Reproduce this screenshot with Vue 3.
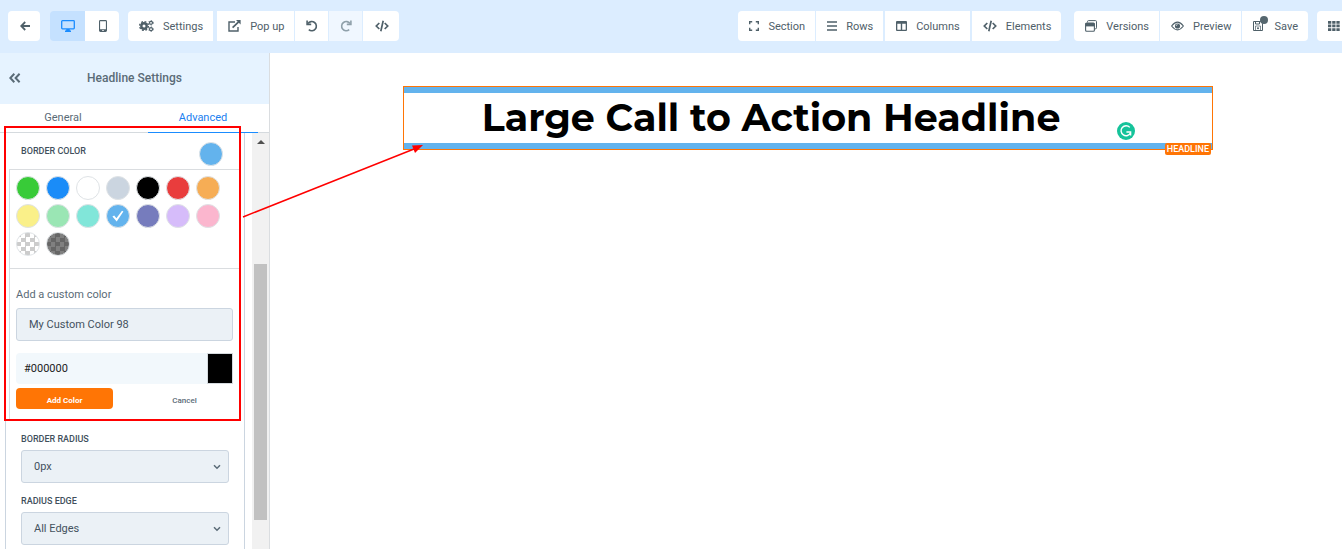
<script setup>
import { ref } from 'vue'

const device = ref('desktop')
const tab = ref('Advanced')
const tabs = ['General', 'Advanced']
const selected = ref('#63b3ed')
const colorName = ref('My Custom Color 98')
const hex = ref('#000000')
const radius = ref('0px')
const edge = ref('All Edges')

const colors = [
  '#38cb38', '#1a8cf8', '#ffffff', '#cbd5e0', '#000000', '#e93d3d', '#f6ad55',
  '#faf089', '#9ae6b4', '#81e6d9', '#63b3ed', '#767cbd', '#d6bcfa', '#fbb6ce',
]
</script>

<template>
  <div class="app">
    <header class="toolbar">
      <div class="group">
        <button class="btn back" aria-label="Back">
          <svg width="10" height="10" viewBox="0 0 10 10"><path d="M10 5H1.4M5.200 1 1.200 5l4 4" fill="none" stroke="currentColor" stroke-width="1.800" /></svg>
        </button>
        <div class="set devices">
          <button class="btn device" :class="{ on: device === 'desktop' }" aria-label="Desktop" @click="device = 'desktop'">
            <svg width="14" height="12" viewBox="0 0 14 12"><rect x=".7" y=".7" width="12.6" height="8.1" rx=".8" fill="none" stroke="currentColor" stroke-width="1.3" /><path d="M5.4 9h3.2l.3 1.6H10V12H4v-1.4h1.1z" fill="currentColor" /></svg>
          </button>
          <button class="btn device" :class="{ on: device === 'phone' }" aria-label="Phone" @click="device = 'phone'">
            <svg width="8" height="12" viewBox="0 0 8 12"><path fill-rule="evenodd" d="M1.4 0h5.2Q8 0 8 1.4v9.2Q8 12 6.6 12H1.4Q0 12 0 10.6V1.4Q0 0 1.4 0zM1.1 1.3v7.9h5.8V1.3zM3.3 10v1h1.4v-1z" fill="currentColor" /></svg>
          </button>
        </div>
        <button class="btn settings">
          <svg width="15" height="12" viewBox="0 0 15 12">
            <circle cx="5" cy="6" r="2.700" fill="none" stroke="currentColor" stroke-width="2.400" />
            <circle cx="5" cy="6" r="4.400" fill="none" stroke="currentColor" stroke-width="1.400" stroke-dasharray="1.900 1.556" />
            <circle cx="12" cy="2.8" r="1.5" fill="none" stroke="currentColor" stroke-width="1.2" />
            <circle cx="12" cy="2.8" r="2.3" fill="none" stroke="currentColor" stroke-width=".8" stroke-dasharray="1.2 1.2" />
            <circle cx="12" cy="9.2" r="1.5" fill="none" stroke="currentColor" stroke-width="1.2" />
            <circle cx="12" cy="9.2" r="2.3" fill="none" stroke="currentColor" stroke-width=".8" stroke-dasharray="1.2 1.2" />
          </svg>
          Settings
        </button>
        <div class="set">
          <button class="btn">
            <svg width="13" height="12" viewBox="0 0 13 12"><path d="M7 2H1v9h9V7" fill="none" stroke="currentColor" stroke-width="1.4" /><path d="M4.6 7.6 10.6 1.8" stroke="currentColor" stroke-width="1.7" /><path d="M8 0h4.6v4.6z" fill="currentColor" /></svg>
            Pop up
          </button>
          <button class="btn history" aria-label="Undo">
            <svg width="12" height="12" viewBox="0 0 12 12"><path d="M2 3.5A4.6 4.6 0 1 1 2.8 9.7" fill="none" stroke="currentColor" stroke-width="1.600" /><path d="M1.1.4V4.4H5.2" fill="none" stroke="currentColor" stroke-width="1.600" /></svg>
          </button>
          <button class="btn history" aria-label="Redo" disabled>
            <svg width="12" height="12" viewBox="0 0 12 12"><path d="M10 3.5A4.6 4.6 0 1 0 9.2 9.7" fill="none" stroke="currentColor" stroke-width="1.600" /><path d="M10.9.4V4.4H6.8" fill="none" stroke="currentColor" stroke-width="1.600" /></svg>
          </button>
          <button class="btn code" aria-label="Code">
            <svg width="14" height="12" viewBox="0 0 14 12"><path d="M4.3 3 1.3 6l3 3M9.7 3l3 3-3 3M8.2.8 5.8 11.2" fill="none" stroke="currentColor" stroke-width="1.700" /></svg>
          </button>
        </div>
      </div>

      <div class="group end">
        <div class="set loose">
          <div class="set">
            <button class="btn">
              <svg width="10" height="10" viewBox="0 0 10 10"><path d="M.7 3.2V.7h2.5M6.8.7h2.5v2.5M9.3 6.8v2.5H6.8M3.2 9.3H.7V6.8" fill="none" stroke="currentColor" stroke-width="1.4" /></svg>
              Section
            </button>
            <button class="btn">
              <svg width="10" height="10" viewBox="0 0 10 10"><path d="M0 1h10M0 5h10M0 9h10" stroke="currentColor" stroke-width="1.3" /></svg>
              Rows
            </button>
          </div>
          <button class="btn">
            <svg width="11" height="10" viewBox="0 0 11 10"><path fill-rule="evenodd" d="M1 0h9q1 0 1 1v8q0 1-1 1H1q-1 0-1-1V1q0-1 1-1zM1.3 2.7v6h3.5v-6zM6.2 2.7v6h3.5v-6z" fill="currentColor" /></svg>
            Columns
          </button>
          <button class="btn">
            <svg width="14" height="12" viewBox="0 0 14 12"><path d="M4.3 3 1.3 6l3 3M9.7 3l3 3-3 3M8.2.8 5.8 11.2" fill="none" stroke="currentColor" stroke-width="1.700" /></svg>
            Elements
          </button>
        </div>
        <div class="set files">
          <button class="btn">
            <svg width="12" height="12" viewBox="0 0 12 12"><path d="M2.5 2.4V1.6Q2.5.6 3.5.6h7q1 0 1 1v6.2q0 1-1 1h-.6" fill="none" stroke="currentColor" /><rect x=".6" y="3" width="8.8" height="8.2" rx="1" fill="none" stroke="currentColor" stroke-width="1.1" /><path d="M.6 3h8.8v3.4H.6z" fill="currentColor" /></svg>
            Versions
          </button>
          <button class="btn">
            <svg width="13" height="10" viewBox="0 0 13 10"><path d="M.6 5Q6.5-2.8 12.4 5 6.5 12.800.6 5z" fill="none" stroke="currentColor" stroke-width="1.1" /><circle cx="6.5" cy="5" r="2.6" fill="currentColor" /><path d="M5.2 4.900Q5.200 3.600 6.500 3.600" fill="none" stroke="#fff" stroke-width=".7" /></svg>
            Preview
          </button>
          <button class="btn save">
            <span class="save-icon">
              <svg width="10" height="10" viewBox="0 0 10 10"><path d="M.5.5h7l2 2v7h-9z" fill="none" stroke="currentColor" /><path d="M2.500.5v2.500h4V.5" fill="none" stroke="currentColor" /><path d="M2.500 9.500V5h5v4.500" fill="none" stroke="currentColor" stroke-width=".7" /><circle cx="5" cy="7.200" r="1" fill="currentColor" /></svg>
              <i class="dot"></i>
            </span>
            Save
          </button>
        </div>
        <button class="btn grid" aria-label="Apps">
          <svg width="14" height="10" viewBox="0 0 14 10"><path d="M0 0h3.300v2.700H0zM4.200 0h3.300v2.700H4.200zM8.400 0h3.300v2.700H8.400zM0 3.600h3.300v2.700H0zM4.200 3.600h3.300v2.700H4.200zM8.400 3.600h3.300v2.700H8.400zM0 7.200h3.300v2.700H0zM4.200 7.200h3.300v2.700H4.200zM8.400 7.200h3.300v2.700H8.400z" fill="currentColor" /></svg>
        </button>
      </div>
    </header>

    <div class="workspace">
      <aside class="sidebar">
        <div class="side-head">
          <button class="collapse" aria-label="Collapse panel">
            <svg width="12" height="10" viewBox="0 0 12 10"><path d="M5.300.8 1.300 5l4 4.200M10.600.8 6.600 5l4 4.200" fill="none" stroke="currentColor" stroke-width="2" /></svg>
          </button>
          <h2>Headline Settings</h2>
        </div>
        <nav class="tabs">
          <button v-for="t in tabs" :key="t" :class="{ active: tab === t }" @click="tab = t">{{ t }}</button>
        </nav>
        <div class="scroll">
          <div class="panel">
            <div class="color-head">
              <span class="caption">Border Color</span>
              <button class="swatch current" aria-label="Current color" :style="{ background: selected }"></button>
            </div>
            <div class="picker">
              <div class="palette">
                <button
                  v-for="c in colors"
                  :key="c"
                  class="swatch"
                  :aria-label="c"
                  :style="{ background: c }"
                  @click="selected = c"
                >
                  <svg v-if="selected === c" width="12" height="12" viewBox="0 0 12 12"><path d="M.4 6.600 2.200 5.400 4.400 8.200 10 .8l1.400.8L4.700 11.400z" fill="#fff" /></svg>
                </button>
                <button class="swatch checker" aria-label="Transparent"></button>
                <button class="swatch checker dark" aria-label="Translucent black"></button>
              </div>
              <form class="custom" @submit.prevent>
                <label class="hint" for="color-name">Add a custom color</label>
                <input id="color-name" v-model="colorName" class="field" type="text" />
                <div class="hex">
                  <input v-model="hex" type="text" aria-label="Hex value" />
                  <input v-model="hex" type="color" aria-label="Pick a color" />
                </div>
                <div class="actions">
                  <button class="add" type="submit">Add Color</button>
                  <button class="cancel" type="button">Cancel</button>
                </div>
              </form>
            </div>
            <div class="option">
              <label class="caption" for="radius">Border Radius</label>
              <div class="select">
                <select id="radius" v-model="radius" class="field"><option>0px</option><option>5px</option><option>10px</option></select>
                <svg width="8" height="6" viewBox="0 0 8 6"><path d="m1 1.200 3 3 3-3" fill="none" stroke="currentColor" stroke-width="1.500" /></svg>
              </div>
            </div>
            <div class="option">
              <label class="caption" for="edge">Radius Edge</label>
              <div class="select">
                <select id="edge" v-model="edge" class="field"><option>All Edges</option><option>Top Only</option><option>Bottom Only</option></select>
                <svg width="8" height="6" viewBox="0 0 8 6"><path d="m1 1.200 3 3 3-3" fill="none" stroke="currentColor" stroke-width="1.500" /></svg>
              </div>
            </div>
          </div>
          <div class="scrollbar">
            <svg width="8" height="4" viewBox="0 0 8 4"><path d="M0 4 4 0l4 4z" fill="#505050" /></svg>
            <div class="thumb"></div>
          </div>
        </div>
      </aside>

      <main class="canvas">
        <section class="headline">
          <h1>Large Call to Action Headline</h1>
          <svg class="checker-badge" width="18" height="18" viewBox="0 0 18 18"><circle cx="9" cy="9" r="9" fill="#15c39a" /><path d="M12.800 5.400A5 5 0 1 0 13.600 10.800" fill="none" stroke="#fff" stroke-width="1.400" /><path d="M9.400 10h4.200v3.400" fill="none" stroke="#fff" stroke-width="1.400" /></svg>
          <span class="tag">HEADLINE</span>
        </section>
      </main>
    </div>

    <div class="callout"></div>
    <svg class="arrow" width="184" height="80" viewBox="0 0 184 80"><path d="M1 76 172 8" stroke="#f00" stroke-width="1.400" /><path d="M181 4 170 4.600 173 12z" fill="#f00" /></svg>
  </div>
</template>

<style>
body {
  background: #fff;
}
</style>

<style scoped>
.app {
  position: relative;
  display: flex;
  flex-direction: column;
  height: 100vh;
  overflow: hidden;
  font-family: Roboto, "Liberation Sans", sans-serif;
  font-size: 12px;
  color: #5a6b77;
}
* {
  box-sizing: border-box;
}
button,
input,
select {
  font: inherit;
  color: inherit;
  border: 0;
  padding: 0;
  margin: 0;
  background: none;
}
svg {
  display: block;
  flex: none;
}

.toolbar {
  display: flex;
  justify-content: space-between;
  flex: none;
  height: 53px;
  padding: 11px 0 12px 8px;
  background: #dcedff;
}
.group,
.set {
  display: flex;
}
.set {
  gap: 1px;
}
.loose {
  gap: 2px;
}
.btn {
  display: flex;
  align-items: center;
  justify-content: center;
  gap: 9px;
  height: 30px;
  padding: 0 10px 0 11px;
  background: #fff;
  font-weight: 400;
  font-size: 11px;
  color: #4f6069;
  white-space: nowrap;
}
.back {
  width: 32px;
  border-radius: 4px;
}
.devices {
  gap: 0;
  margin: 0 9px 0 10px;
}
.device {
  width: 35px;
}
.device:first-child {
  border-radius: 4px 0 0 4px;
}
.device:last-child {
  width: 34px;
  border-radius: 0 4px 4px 0;
}
.device.on {
  background: #c5e1ff;
  color: #1a8cff;
}
.settings {
  margin-right: 4px;
  border-radius: 4px 0 0 4px;
}
.history {
  width: 33px;
}
.code {
  width: 36px;
}
.history:disabled {
  background: #f0f7ff;
  color: #8fa0aa;
}
.set > .btn:last-child {
  border-radius: 0 4px 4px 0;
}
.loose .set > .btn:last-child {
  border-radius: 0;
}
.end .set .btn:first-child {
  border-radius: 4px 0 0 4px;
}
.end .loose > .btn {
  border-radius: 0;
}
.end .loose > .btn:last-child {
  border-radius: 0 4px 4px 0;
}
.files {
  margin: 0 9px 0 13px;
}
.save-icon {
  position: relative;
  margin-right: 2px;
}
.dot {
  position: absolute;
  top: -5px;
  left: 7px;
  width: 8px;
  height: 8px;
  border-radius: 50%;
  background: #56676f;
}
.grid {
  width: 25px;
  padding: 0 0 0 11px;
  justify-content: flex-start;
  border-radius: 4px 0 0 4px;
}

.workspace {
  display: flex;
  flex: 1;
  min-height: 0;
}
.sidebar {
  display: flex;
  flex-direction: column;
  width: 270px;
  flex: none;
  border-right: 1px solid #dadde0;
}
.side-head {
  display: grid;
  grid-template-columns: 24px 1fr 24px;
  align-items: center;
  height: 51px;
  flex: none;
  padding-bottom: 2px;
  background: #e6f3ff;
}
.collapse {
  padding-left: 9px;
}
h2 {
  margin: 0;
  text-align: center;
  font-size: 12px;
  font-weight: 500;
}
.tabs {
  display: flex;
  gap: 30px;
  flex: none;
  height: 29px;
  padding-left: 8px;
  border-bottom: 1px solid #d5dade;
}
.tabs button {
  width: 110px;
  height: 29px;
  border-bottom: 1px solid transparent;
  padding-bottom: 2px;
  font-size: 11px;
}
.tabs .active {
  color: #1a80f0;
  border-color: #1a8cff;
}
.scroll {
  display: flex;
  justify-content: space-between;
  flex: 1;
  min-height: 0;
  overflow: hidden;
  padding-left: 5px;
}
.panel {
  width: 240px;
  flex: none;
  border: solid #cbd5e0;
  border-width: 0 1px;
}
.color-head {
  display: flex;
  justify-content: space-between;
  align-items: flex-end;
  height: 36px;
  padding: 0 21px 3px 15px;
}
.color-head .caption {
  padding-bottom: 9px;
}
.caption {
  display: block;
  font-size: 9px;
  line-height: 12px;
  font-weight: 500;
  text-transform: uppercase;
  color: #414f5c;
}
.swatch {
  display: flex;
  align-items: center;
  justify-content: center;
  width: 24px;
  height: 24px;
  border: 1px solid #dfe3e6;
  border-radius: 50%;
}
.picker {
  margin: 0 4px 0 3px;
  border: solid #dadde0;
  border-width: 1px 0 0 1px;
}
.palette {
  display: grid;
  grid-template-columns: repeat(7, 24px);
  gap: 4px 6px;
  padding: 6px 6px 12px;
  border-bottom: 1px solid #dadde0;
}
.checker {
  background: repeating-conic-gradient(#ccc 0 25%, #fff 0 50%) 4px 0 / 9px 9px;
}
.checker.dark {
  background: repeating-conic-gradient(#666 0 25%, #808080 0 50%) 4px 0 / 9px 9px;
}
.custom {
  padding: 18px 7px 12px 6px;
}
.hint {
  display: block;
  margin-bottom: 6px;
  font-size: 11px;
  line-height: 15px;
}
.field {
  display: block;
  width: 100%;
  height: 33px;
  padding: 0 12px;
  border: 1px solid #cbd5e0;
  border-radius: 3px;
  background: #ebf1f6;
  font-size: 11px;
  color: #44525e;
}
.hex {
  display: flex;
  margin-top: 12px;
  height: 31px;
  border-radius: 4px;
  background: #f2f8fc;
}
.hex input[type="text"] {
  flex: 1;
  min-width: 0;
  padding-left: 8px;
  font-size: 11px;
  color: #222;
}
.hex input[type="color"] {
  width: 26px;
  height: 31px;
  border: 1px solid #d5dade;
}
.hex input::-webkit-color-swatch-wrapper {
  padding: 0;
}
.hex input::-webkit-color-swatch {
  border: 0;
}
.actions {
  display: grid;
  grid-template-columns: 97px 97px;
  justify-content: space-between;
  margin-top: 4px;
  height: 21px;
  font-size: 8px;
}
.actions button {
  padding-top: 3px;
}
.actions .add {
  border-radius: 4px;
  background: #ff7505;
  color: #fff;
  font-weight: 700;
}
.actions .cancel {
  font-weight: 500;
}
.option {
  padding: 12px 15px 0;
}
.option .caption {
  margin-bottom: 5px;
}
.select {
  position: relative;
}
.select select {
  appearance: none;
}
.select svg {
  position: absolute;
  top: 14px;
  right: 8px;
  pointer-events: none;
}
.scrollbar {
  display: flex;
  flex-direction: column;
  align-items: center;
  width: 17px;
  padding-top: 7px;
  background: #f1f1f1;
}
.thumb {
  width: 13px;
  height: 256px;
  margin-top: 120px;
  flex: none;
  background: #c1c1c1;
}

.canvas {
  flex: 1;
  padding: 33px 0 0 4px;
}
.headline {
  position: relative;
  width: 810px;
  max-width: 100%;
  margin: 0 auto;
  border: 1px solid #ff7505;
}
h1 {
  margin: 0;
  padding: 0 74px 0 0;
  border: solid #63b3ed;
  border-width: 6px 0;
  font-family: Montserrat, Inter, "Open Sans", sans-serif;
  font-size: 38px;
  line-height: 50px;
  font-weight: 700;
  color: #000;
  text-align: center;
}
.checker-badge {
  position: absolute;
  right: 77px;
  bottom: 9px;
}
.tag {
  position: absolute;
  right: 1px;
  bottom: -6px;
  padding: 0 2px;
  border-radius: 2px;
  background: #ff7505;
  font-size: 9px;
  line-height: 12px;
  font-weight: 500;
  color: #fff;
}
.callout {
  position: absolute;
  top: 126px;
  left: 4px;
  width: 237px;
  height: 295px;
  border: 2px solid #f00;
}
.arrow {
  position: absolute;
  top: 141px;
  left: 242px;
}
</style>
